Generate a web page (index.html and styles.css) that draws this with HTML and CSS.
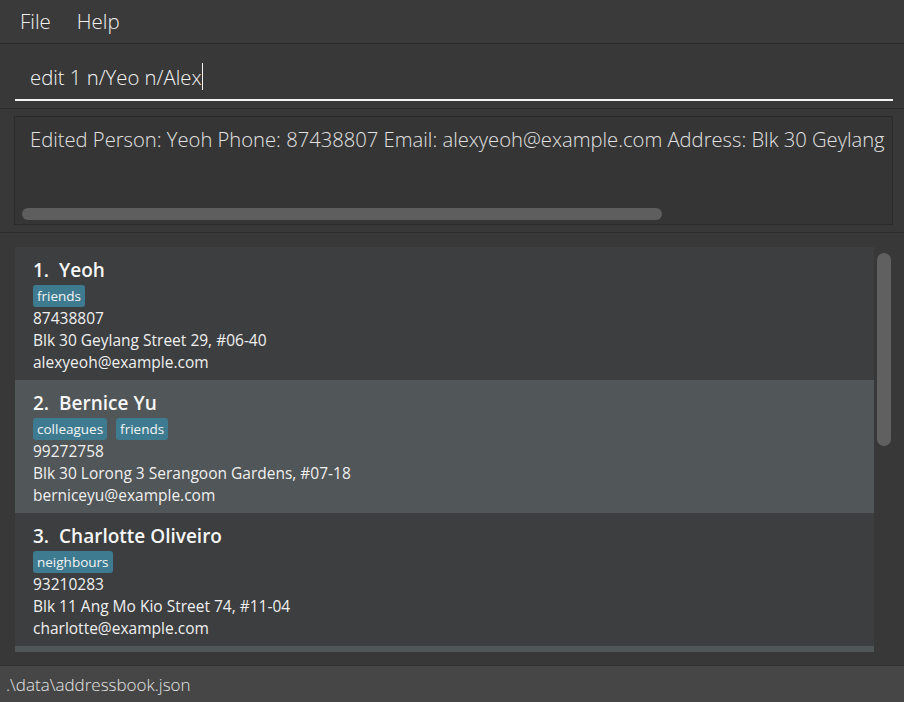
FILE: index.html
```html
<!DOCTYPE html>
<html>
<head>
<meta charset="utf-8">
<link rel="stylesheet" href="styles.css">
</head>
<body>
<div class="app">
  <div class="menubar">
    <span class="menu">File</span>
    <span class="menu">Help</span>
  </div>
  <div class="command-pane">
    <div class="command-field"><span class="command-text">edit 1 n/Yeo n/Alex</span><span class="caret"></span></div>
  </div>
  <div class="result-pane">
    <div class="result-box">
      <div class="result-text">Edited Person: Yeoh Phone: 87438807 Email: alexyeoh@example.com Address: Blk 30 Geylang</div>
      <div class="hscroll"><div class="hthumb"></div></div>
    </div>
  </div>
  <div class="list-pane">
    <div class="list-viewport">
      <div class="card even">
        <div class="name"><span>1.</span><span>Yeoh</span></div>
        <div class="tags"><span class="tag">friends</span></div>
        <div class="info">87438807</div>
        <div class="info">Blk 30 Geylang Street 29, #06-40</div>
        <div class="info">alexyeoh@example.com</div>
      </div>
      <div class="card odd">
        <div class="name"><span>2.</span><span>Bernice Yu</span></div>
        <div class="tags"><span class="tag">colleagues</span><span class="tag">friends</span></div>
        <div class="info">99272758</div>
        <div class="info">Blk 30 Lorong 3 Serangoon Gardens, #07-18</div>
        <div class="info">berniceyu@example.com</div>
      </div>
      <div class="card even">
        <div class="name"><span>3.</span><span>Charlotte Oliveiro</span></div>
        <div class="tags"><span class="tag">neighbours</span></div>
        <div class="info">93210283</div>
        <div class="info">Blk 11 Ang Mo Kio Street 74, #11-04</div>
        <div class="info">charlotte@example.com</div>
      </div>
      <div class="card odd short"></div>
    </div>
    <div class="vscroll"><div class="vthumb"></div></div>
  </div>
  <div class="statusbar">.\data\addressbook.json</div>
</div>
</body>
</html>
```
FILE: styles.css
```css
html, body {
  margin: 0;
  padding: 0;
  background: #383838;
}
.app {
  width: 904px;
  height: 702px;
  display: flex;
  flex-direction: column;
  overflow: hidden;
  font-family: "Open Sans", "Noto Sans", sans-serif;
  color: #f0f0f0;
}
.menubar {
  height: 43px;
  flex: none;
  background: #3a3a3a;
  border-bottom: 1px solid #2c2c2c;
  display: flex;
  align-items: center;
  gap: 26px;
  padding-left: 20px;
  padding-bottom: 2px;
  box-sizing: border-box;
  height: 44px;
  font-size: 20.5px;
  font-weight: 300;
  color: #f2f2f2;
}
.command-pane {
  height: 64px;
  flex: none;
  background: #383838;
  border-bottom: 1px solid #2c2c2c;
  padding: 0 11px 0 15px;
  display: flex;
  flex-direction: column;
  justify-content: flex-end;
}
.command-field {
  height: 45px;
  margin-bottom: 7px;
  border-bottom: 2px solid #f4f4f4;
  padding-left: 15px;
  display: flex;
  align-items: center;
  font-size: 20.3px;
  font-weight: 300;
  color: #f4f4f4;
}
.caret {
  width: 1px;
  height: 27px;
  background: #f4f4f4;
  margin-left: 1px;
}
.result-pane {
  flex: none;
  background: #383838;
  border-bottom: 1px solid #2c2c2c;
  padding: 7px 11px 7px 14px;
  box-sizing: border-box;
  height: 124px;
}
.result-box {
  height: 100%;
  box-sizing: border-box;
  background: #353535;
  border: 1px solid #2a2a2a;
  display: flex;
  flex-direction: column;
  overflow: hidden;
}
.result-text {
  padding: 8px 0 0 15px;
  font-size: 20.2px;
  font-weight: 300;
  white-space: nowrap;
  color: #e2e2e2;
  flex: 1;
}
.hscroll {
  height: 12px;
  padding: 0 0 4px 7px;
}
.hthumb {
  width: 640px;
  height: 12px;
  border-radius: 6px;
  background: #5e5e5e;
}
.list-pane {
  flex: 1;
  display: flex;
  padding: 14px 11px 0 15px;
  background: #383838;
  gap: 2px;
}
.list-viewport {
  width: 859px;
  height: 405px;
  overflow: hidden;
}
.card {
  height: 133px;
  box-sizing: border-box;
  padding: 10px 0 0 18px;
}
.card.short { height: 6px; padding: 0; }
.card.even { background: #3c3e3f; }
.card.odd { background: #515658; }
.name {
  display: flex;
  gap: 10px;
  font-size: 19px;
  font-weight: 600;
  line-height: 26px;
  color: #f6f6f6;
}
.tags {
  display: flex;
  gap: 9px;
  margin-top: 2px;
  height: 22px;
}
.tag {
  background: #3e7b91;
  border-radius: 3px;
  padding: 0 4px;
  font-size: 13.5px;
  line-height: 22px;
  color: #f4f4f4;
}
.info {
  font-size: 15.5px;
  line-height: 22px;
  color: #f0f0f0;
  white-space: nowrap;
}
.vscroll {
  width: 16px;
  height: 405px;
  padding-top: 6px;
  display: flex;
  justify-content: center;
}
.vthumb {
  width: 14px;
  height: 193px;
  border-radius: 7px;
  background: #606060;
}
.statusbar {
  height: 37px;
  flex: none;
  box-sizing: border-box;
  background: #464646;
  border-top: 1px solid #303030;
  padding-left: 6px;
  display: flex;
  align-items: center;
  font-size: 17px;
  font-weight: 300;
  color: #e4e4e4;
}
```
